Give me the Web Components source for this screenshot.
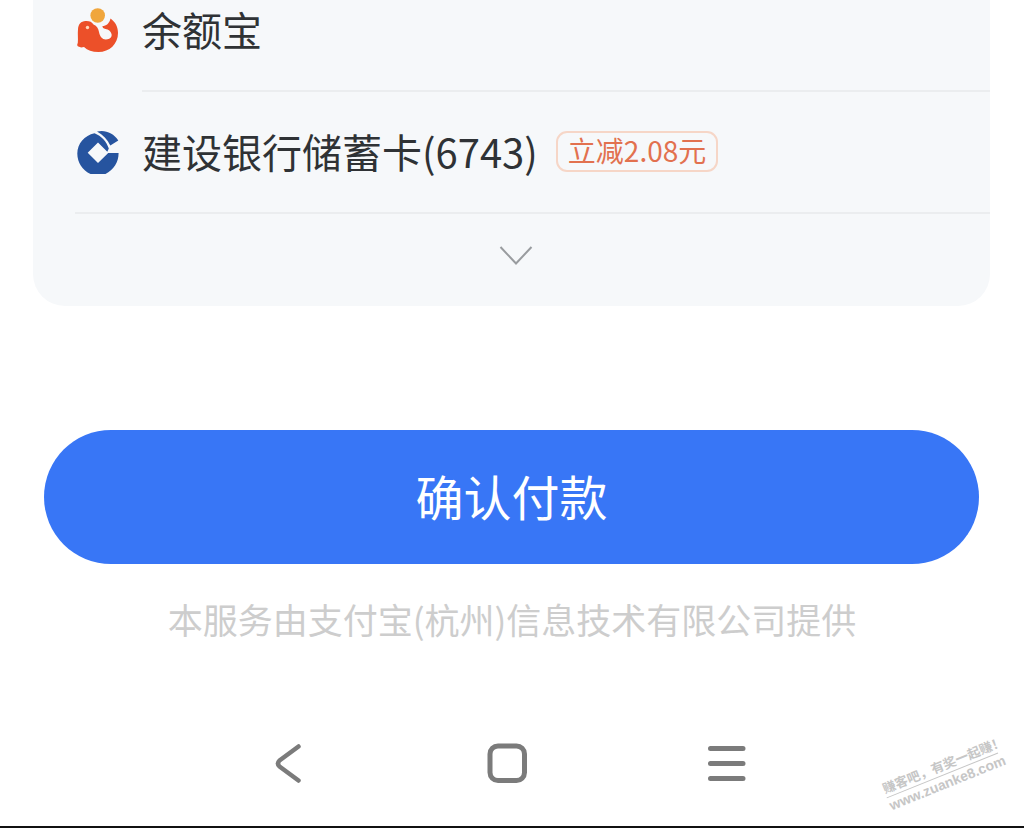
<!DOCTYPE html>
<html lang="zh-CN">
<head>
<meta charset="utf-8">
<meta name="viewport" content="width=device-width, initial-scale=1">
<title>确认付款</title>
<style>
  body {
    margin: 0;
    background: #fff;
    font-family: "Noto Sans CJK SC", sans-serif;
    color: #2f3235;
  }
</style>
</head>
<body>
<pay-screen>
  <pay-methods>
    <pay-method label="余额宝">
      <svg slot="icon" width="44" height="46" viewBox="0 0 44 46" aria-hidden="true">
        <circle cx="21.7" cy="8.5" r="7.3" fill="#f0a63c"/>
        <path fill="#ec5029" d="M2 22C2.400 17 5 14.200 9.500 14C13.500 13.800 15.800 14.800 17.500 17.500C21 19 22.300 21.500 23 25C24 30 26.500 32.600 30 32.400C34 32.300 36.300 30 35.500 27C34.700 23.800 32.500 22.600 29.500 22C27.500 21.500 26.300 20.500 26.500 19C30 19 33.500 16.500 34.500 11.500C39.500 15 42 20 42 26C42 37 33.500 45 22.500 45C16 45 11.500 43.200 8 40C5.500 40.600 4 40.500 2.300 39.600C1 38.800 1 37.500 1.800 36C2.300 32 1.500 27 2 22Z"/>
        <circle cx="11.500" cy="20.500" r="1.700" fill="#ffd9bd"/>
      </svg>
    </pay-method>
    <pay-method label="建设银行储蓄卡(6743)" last>
      <svg slot="icon" width="44" height="46" viewBox="0 0 44 46" aria-hidden="true">
        <path fill="#26549f" d="M32.200 24H42.600C42.600 33.500 37.500 41 29.500 45H14.500C6.500 41.500 1.300 33.500 1.300 24.500C1.300 14.500 8.500 6.500 18.500 4.200C25.500 7 30.500 12.500 32.800 19.500L31.300 22.700L22 13.400L11.700 23.700L22 34Z"/>
        <path fill="#26549f" d="M21 2.600C29 0.500 37.500 4 42.300 11.500L34.300 16.500C31.500 10.500 27 5.800 21 2.600Z"/>
      </svg>
      <pay-badge slot="badge">立减2.08元</pay-badge>
    </pay-method>
  </pay-methods>
  <confirm-button>确认付款</confirm-button>
  <service-note>本服务由支付宝(杭州)信息技术有限公司提供</service-note>
  <system-nav slot="nav"></system-nav>
  <site-mark slot="mark" text="赚客吧，有奖一起赚！" site="www.zuanke8.com"></site-mark>
</pay-screen>

<script>
const attach = (element, html) => {
  const template = document.createElement('template');
  template.innerHTML = html;
  element.attachShadow({ mode: 'open' }).appendChild(template.content.cloneNode(true));
};

class PayScreen extends HTMLElement {
  constructor() {
    super();
    attach(this, /* html */ `
      <style>
        :host {
          box-sizing: border-box;
          display: flex;
          flex-direction: column;
          min-height: 100vh;
          position: relative;
          border-bottom: 2px solid #111;
        }

        main {
          flex: 1;
        }
      </style>
      <main><slot></slot></main>
      <slot name="nav"></slot>
      <slot name="mark"></slot>
    `);
  }
}

class PayMethods extends HTMLElement {
  constructor() {
    super();
    attach(this, /* html */ `
      <style>
        :host {
          display: block;
          margin: 0 34px 0 33px;
          background: #f6f8fa;
          border-radius: 0 0 32px 32px;
        }

        button {
          display: flex;
          justify-content: center;
          align-items: center;
          width: 100%;
          height: 92px;
          padding: 0 35px 8px 43px;
          border: 0;
          background: none;
        }
      </style>
      <slot></slot>
      <button type="button" aria-label="展开更多">
        <svg width="34" height="22" viewBox="0 0 34 22" fill="none" stroke="#999c9f" stroke-width="2">
          <path d="M1.500 2L17 18.500L32.500 2"/>
        </svg>
      </button>
    `);
  }
}

class PayMethod extends HTMLElement {
  constructor() {
    super();
    attach(this, /* html */ `
      <style>
        :host {
          display: flex;
          align-items: stretch;
          padding-left: 43px;
        }

        :host([last]) {
          border-image: linear-gradient(to right, transparent 43px, #ebedef 43px) 1;
          border-bottom: 2px solid;
        }

        .icon {
          display: flex;
          align-items: center;
          flex: none;
          width: 66px;
        }

        .body {
          display: flex;
          align-items: center;
          flex: 1;
          gap: 18px;
          height: 120px;
        }

        :host(:not([last])) .icon,
        :host(:not([last])) .body {
          height: 60px;
          padding-bottom: 30px;
        }

        :host(:not([last])) .body {
          border-bottom: 2px solid #ebedef;
        }

        .label {
          padding-bottom: 2px;
          font-size: 40px;
          line-height: 58px;
          white-space: nowrap;
        }
      </style>
      <div class="icon"><slot name="icon"></slot></div>
      <div class="body">
        <span class="label"></span>
        <slot name="badge"></slot>
      </div>
    `);
  }

  connectedCallback() {
    this.shadowRoot.querySelector('.label').textContent = this.getAttribute('label');
  }
}

class PayBadge extends HTMLElement {
  constructor() {
    super();
    attach(this, /* html */ `
      <style>
        :host {
          display: block;
          padding: 0 10px 2px;
          border: 2px solid #f6d6c7;
          border-radius: 11px;
          color: #e2714f;
          font-size: 28px;
          line-height: 35px;
          white-space: nowrap;
          margin-bottom: 2px;
        }
      </style>
      <slot></slot>
    `);
  }
}

class ConfirmButton extends HTMLElement {
  constructor() {
    super();
    attach(this, /* html */ `
      <style>
        :host {
          display: block;
          margin: 124px 45px 0 44px;
        }

        button {
          display: block;
          width: 100%;
          height: 134px;
          padding: 0 0 4px;
          border: 0;
          border-radius: 67px;
          background: #3876f6;
          color: #fff;
          font: inherit;
          font-size: 48px;
          line-height: 72px;
        }
      </style>
      <button type="button"><slot></slot></button>
    `);
  }
}

class ServiceNote extends HTMLElement {
  constructor() {
    super();
    attach(this, /* html */ `
      <style>
        :host {
          display: block;
          margin-top: 31px;
          color: #cdcdcd;
          font-size: 35px;
          line-height: 48px;
          text-align: center;
        }
      </style>
      <slot></slot>
    `);
  }
}

class SystemNav extends HTMLElement {
  constructor() {
    super();
    attach(this, /* html */ `
      <style>
        nav {
          display: flex;
          justify-content: center;
          gap: 171px;
          padding: 0 10px 39px 0;
        }

        button {
          display: flex;
          width: 48px;
          height: 48px;
          padding: 0;
          border: 0;
          background: none;
        }

        svg {
          fill: none;
          stroke: #7b7b7b;
          stroke-width: 5;
          stroke-linecap: round;
          stroke-linejoin: round;
        }
      </style>
      <nav>
        <button type="button" aria-label="返回">
          <svg width="48" height="48" viewBox="0 0 48 48"><path stroke-width="4.500" d="M34.500 7.500L15.500 21.500Q12.500 24.500 15.500 27.500L34.500 41.500"/></svg>
        </button>
        <button type="button" aria-label="主屏幕">
          <svg width="48" height="48" viewBox="0 0 48 48"><rect x="7" y="7" width="34.500" height="34.500" rx="8"/></svg>
        </button>
        <button type="button" aria-label="最近任务">
          <svg width="48" height="48" viewBox="0 0 48 48"><path d="M8.500 9.500H41M8.500 24.500H41M8.500 39.500H41"/></svg>
        </button>
      </nav>
    `);
  }
}

class SiteMark extends HTMLElement {
  constructor() {
    super();
    attach(this, /* html */ `
      <style>
        :host {
          position: absolute;
          right: 22px;
          bottom: 34px;
          width: 120px;
          color: #c6c6c6;
          white-space: nowrap;
          transform: rotate(-22deg);
        }

        .text {
          border-bottom: 1px solid #c6c6c6;
          font-size: 13px;
          font-weight: 700;
          line-height: 18px;
        }

        .site {
          font-family: "Liberation Sans", sans-serif;
          font-size: 14px;
          font-weight: 700;
          line-height: 16px;
        }
      </style>
      <div class="text"></div>
      <div class="site"></div>
    `);
  }

  connectedCallback() {
    this.shadowRoot.querySelector('.text').textContent = this.getAttribute('text');
    this.shadowRoot.querySelector('.site').textContent = this.getAttribute('site');
  }
}

customElements.define('pay-screen', PayScreen);
customElements.define('pay-methods', PayMethods);
customElements.define('pay-method', PayMethod);
customElements.define('pay-badge', PayBadge);
customElements.define('confirm-button', ConfirmButton);
customElements.define('service-note', ServiceNote);
customElements.define('system-nav', SystemNav);
customElements.define('site-mark', SiteMark);
</script>
</body>
</html>
